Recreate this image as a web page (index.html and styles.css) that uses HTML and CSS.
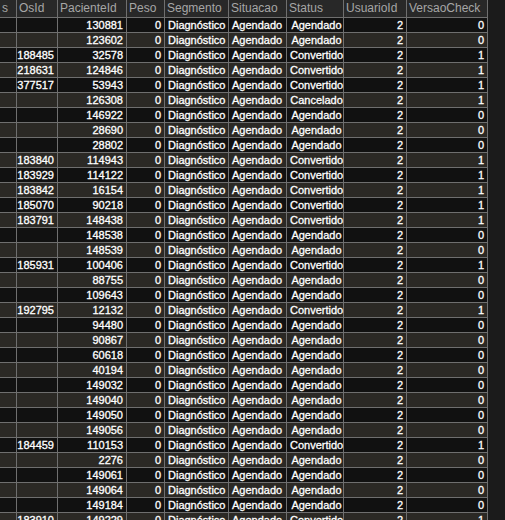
FILE: index.html
```html
<!DOCTYPE html>
<html lang="pt">
<head>
<meta charset="utf-8">
<title>Resultados</title>
<link rel="stylesheet" href="styles.css">
</head>
<body>
<div class="grid">
  <div class="row head"><div>s</div><div>OsId</div><div>PacienteId</div><div>Peso</div><div>Segmento</div><div>Situacao</div><div>Status</div><div>UsuarioId</div><div>VersaoCheck</div></div>
  <div class="row"><div></div><div class="n"></div><div class="n">130881</div><div class="n">0</div><div>Diagnóstico</div><div>Agendado</div><div class="c">Agendado</div><div class="n">2</div><div class="n">0</div></div>
  <div class="row"><div></div><div class="n"></div><div class="n">123602</div><div class="n">0</div><div>Diagnóstico</div><div>Agendado</div><div class="c">Agendado</div><div class="n">2</div><div class="n">0</div></div>
  <div class="row"><div></div><div class="n">188485</div><div class="n">32578</div><div class="n">0</div><div>Diagnóstico</div><div>Agendado</div><div class="c">Convertido</div><div class="n">2</div><div class="n">1</div></div>
  <div class="row"><div></div><div class="n">218631</div><div class="n">124846</div><div class="n">0</div><div>Diagnóstico</div><div>Agendado</div><div class="c">Convertido</div><div class="n">2</div><div class="n">1</div></div>
  <div class="row"><div></div><div class="n">377517</div><div class="n">53943</div><div class="n">0</div><div>Diagnóstico</div><div>Agendado</div><div class="c">Convertido</div><div class="n">2</div><div class="n">1</div></div>
  <div class="row"><div></div><div class="n"></div><div class="n">126308</div><div class="n">0</div><div>Diagnóstico</div><div>Agendado</div><div class="c">Cancelado</div><div class="n">2</div><div class="n">1</div></div>
  <div class="row"><div></div><div class="n"></div><div class="n">146922</div><div class="n">0</div><div>Diagnóstico</div><div>Agendado</div><div class="c">Agendado</div><div class="n">2</div><div class="n">0</div></div>
  <div class="row"><div></div><div class="n"></div><div class="n">28690</div><div class="n">0</div><div>Diagnóstico</div><div>Agendado</div><div class="c">Agendado</div><div class="n">2</div><div class="n">0</div></div>
  <div class="row"><div></div><div class="n"></div><div class="n">28802</div><div class="n">0</div><div>Diagnóstico</div><div>Agendado</div><div class="c">Agendado</div><div class="n">2</div><div class="n">0</div></div>
  <div class="row"><div></div><div class="n">183840</div><div class="n">114943</div><div class="n">0</div><div>Diagnóstico</div><div>Agendado</div><div class="c">Convertido</div><div class="n">2</div><div class="n">1</div></div>
  <div class="row"><div></div><div class="n">183929</div><div class="n">114122</div><div class="n">0</div><div>Diagnóstico</div><div>Agendado</div><div class="c">Convertido</div><div class="n">2</div><div class="n">1</div></div>
  <div class="row"><div></div><div class="n">183842</div><div class="n">16154</div><div class="n">0</div><div>Diagnóstico</div><div>Agendado</div><div class="c">Convertido</div><div class="n">2</div><div class="n">1</div></div>
  <div class="row"><div></div><div class="n">185070</div><div class="n">90218</div><div class="n">0</div><div>Diagnóstico</div><div>Agendado</div><div class="c">Convertido</div><div class="n">2</div><div class="n">1</div></div>
  <div class="row"><div></div><div class="n">183791</div><div class="n">148438</div><div class="n">0</div><div>Diagnóstico</div><div>Agendado</div><div class="c">Convertido</div><div class="n">2</div><div class="n">1</div></div>
  <div class="row"><div></div><div class="n"></div><div class="n">148538</div><div class="n">0</div><div>Diagnóstico</div><div>Agendado</div><div class="c">Agendado</div><div class="n">2</div><div class="n">0</div></div>
  <div class="row"><div></div><div class="n"></div><div class="n">148539</div><div class="n">0</div><div>Diagnóstico</div><div>Agendado</div><div class="c">Agendado</div><div class="n">2</div><div class="n">0</div></div>
  <div class="row"><div></div><div class="n">185931</div><div class="n">100406</div><div class="n">0</div><div>Diagnóstico</div><div>Agendado</div><div class="c">Convertido</div><div class="n">2</div><div class="n">1</div></div>
  <div class="row"><div></div><div class="n"></div><div class="n">88755</div><div class="n">0</div><div>Diagnóstico</div><div>Agendado</div><div class="c">Agendado</div><div class="n">2</div><div class="n">0</div></div>
  <div class="row"><div></div><div class="n"></div><div class="n">109643</div><div class="n">0</div><div>Diagnóstico</div><div>Agendado</div><div class="c">Agendado</div><div class="n">2</div><div class="n">0</div></div>
  <div class="row"><div></div><div class="n">192795</div><div class="n">12132</div><div class="n">0</div><div>Diagnóstico</div><div>Agendado</div><div class="c">Convertido</div><div class="n">2</div><div class="n">1</div></div>
  <div class="row"><div></div><div class="n"></div><div class="n">94480</div><div class="n">0</div><div>Diagnóstico</div><div>Agendado</div><div class="c">Agendado</div><div class="n">2</div><div class="n">0</div></div>
  <div class="row"><div></div><div class="n"></div><div class="n">90867</div><div class="n">0</div><div>Diagnóstico</div><div>Agendado</div><div class="c">Agendado</div><div class="n">2</div><div class="n">0</div></div>
  <div class="row"><div></div><div class="n"></div><div class="n">60618</div><div class="n">0</div><div>Diagnóstico</div><div>Agendado</div><div class="c">Agendado</div><div class="n">2</div><div class="n">0</div></div>
  <div class="row"><div></div><div class="n"></div><div class="n">40194</div><div class="n">0</div><div>Diagnóstico</div><div>Agendado</div><div class="c">Agendado</div><div class="n">2</div><div class="n">0</div></div>
  <div class="row"><div></div><div class="n"></div><div class="n">149032</div><div class="n">0</div><div>Diagnóstico</div><div>Agendado</div><div class="c">Agendado</div><div class="n">2</div><div class="n">0</div></div>
  <div class="row"><div></div><div class="n"></div><div class="n">149040</div><div class="n">0</div><div>Diagnóstico</div><div>Agendado</div><div class="c">Agendado</div><div class="n">2</div><div class="n">0</div></div>
  <div class="row"><div></div><div class="n"></div><div class="n">149050</div><div class="n">0</div><div>Diagnóstico</div><div>Agendado</div><div class="c">Agendado</div><div class="n">2</div><div class="n">0</div></div>
  <div class="row"><div></div><div class="n"></div><div class="n">149056</div><div class="n">0</div><div>Diagnóstico</div><div>Agendado</div><div class="c">Agendado</div><div class="n">2</div><div class="n">0</div></div>
  <div class="row"><div></div><div class="n">184459</div><div class="n">110153</div><div class="n">0</div><div>Diagnóstico</div><div>Agendado</div><div class="c">Convertido</div><div class="n">2</div><div class="n">1</div></div>
  <div class="row"><div></div><div class="n"></div><div class="n">2276</div><div class="n">0</div><div>Diagnóstico</div><div>Agendado</div><div class="c">Agendado</div><div class="n">2</div><div class="n">0</div></div>
  <div class="row"><div></div><div class="n"></div><div class="n">149061</div><div class="n">0</div><div>Diagnóstico</div><div>Agendado</div><div class="c">Agendado</div><div class="n">2</div><div class="n">0</div></div>
  <div class="row"><div></div><div class="n"></div><div class="n">149064</div><div class="n">0</div><div>Diagnóstico</div><div>Agendado</div><div class="c">Agendado</div><div class="n">2</div><div class="n">0</div></div>
  <div class="row"><div></div><div class="n"></div><div class="n">149184</div><div class="n">0</div><div>Diagnóstico</div><div>Agendado</div><div class="c">Agendado</div><div class="n">2</div><div class="n">0</div></div>
  <div class="row"><div></div><div class="n">183910</div><div class="n">149229</div><div class="n">0</div><div>Diagnóstico</div><div>Agendado</div><div class="c">Convertido</div><div class="n">2</div><div class="n">1</div></div>
</div>
</body>
</html>
```

FILE: styles.css
```css
html, body {
  margin: 0;
  padding: 0;
  background: #1b1b1b;
  height: 520px;
  overflow: hidden;
}

.grid {
  display: flex;
  flex-direction: column;
  gap: 1px;
  width: max-content;
  background: #6f6f6f;
  padding-right: 1px;
  font-family: "Liberation Sans", Arial, sans-serif;
  font-size: 11px;
}

.row {
  display: grid;
  grid-template-columns: 16px 40px 68px 37px 63px 57px 56px 62px 80px;
  gap: 1px;
  height: 14px;
  line-height: 14px;
}

.row > div {
  background: #111111;
  color: #ffffff;
  padding: 0 2px 0 3px;
  white-space: nowrap;
  overflow: hidden;
  -webkit-text-stroke: 0.3px #ffffff;
}

.row:nth-child(odd) > div {
  background: #2b2925;
}

.row .n {
  text-align: right;
  padding: 0 3px 0 0;
}

.row .c {
  text-align: center;
  padding: 0 0 0 3px;
  overflow: visible;
}

.row.head {
  height: 17px;
  line-height: 17px;
}

.row.head > div {
  background: #282828;
  color: #a6a6a6;
  padding: 0 0 0 2px;
  font-size: 12px;
  -webkit-text-stroke: 0;
}
```
